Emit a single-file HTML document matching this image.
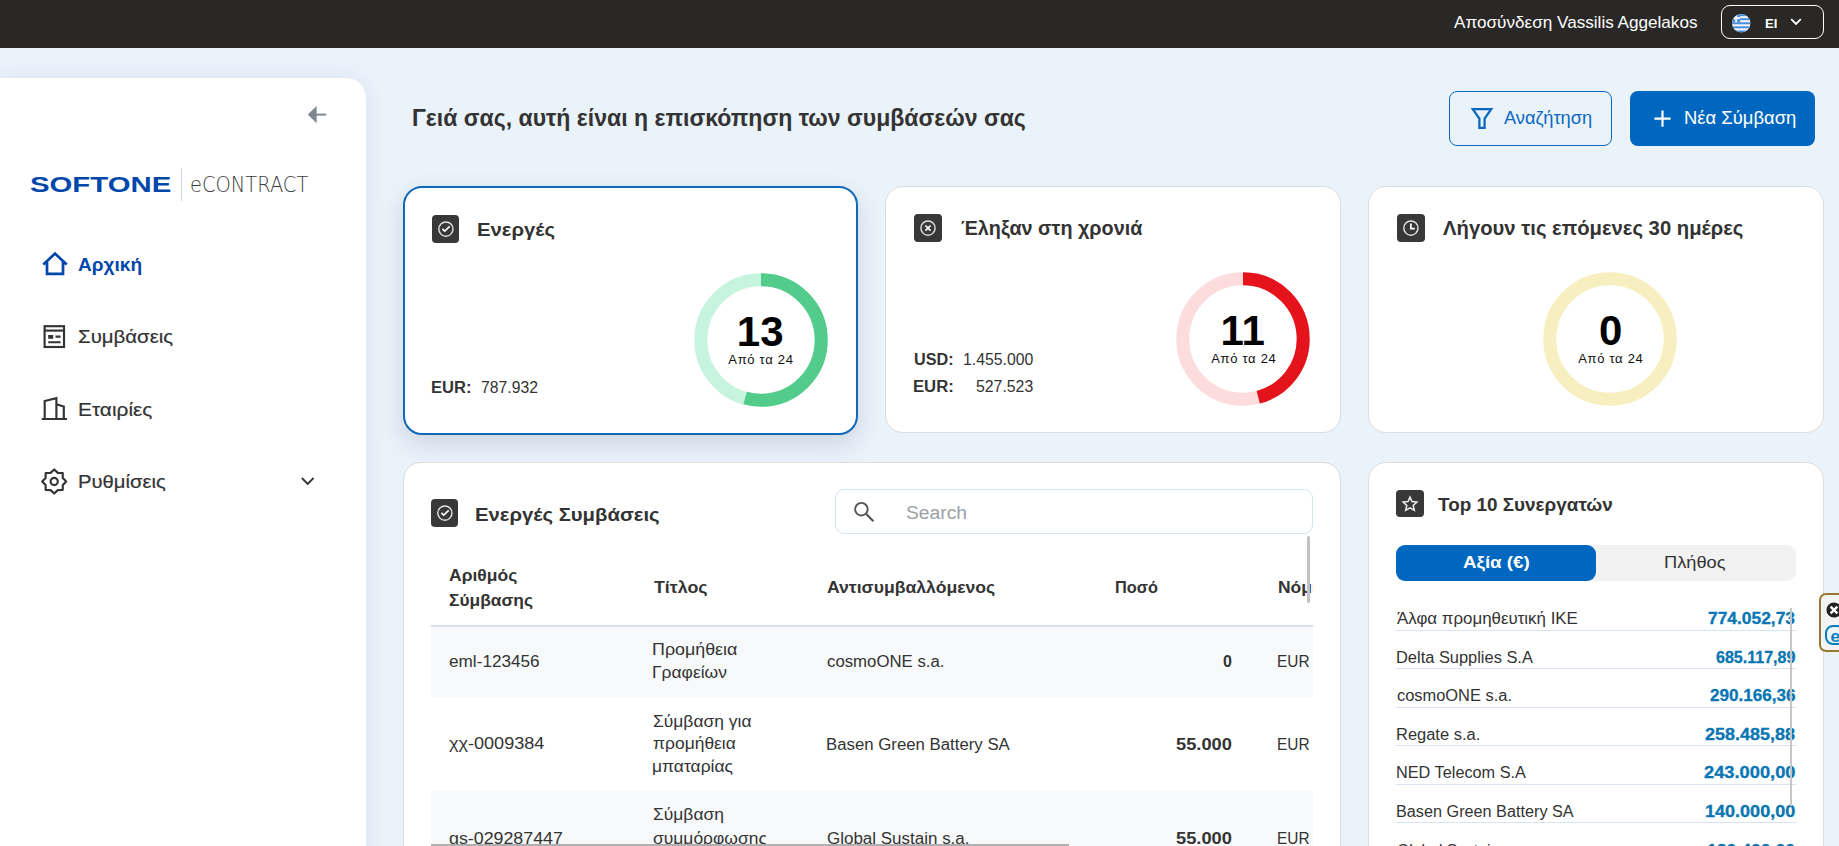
<!DOCTYPE html>
<html lang="el">
<head>
<meta charset="utf-8">
<title>eCONTRACT</title>
<style>
*{box-sizing:border-box;margin:0;padding:0}
html,body{width:1839px;height:846px;overflow:hidden}
body{background:#eaf2fa;font-family:"Liberation Sans",sans-serif;color:#333;position:relative}
.abs,.t{position:absolute}
.t{white-space:nowrap;transform-origin:0 0}
svg{position:absolute;overflow:visible}
#topbar{left:0;top:0;width:1839px;height:48px;background:#292826}
#lang{left:1721px;top:5px;width:103px;height:34px;border:1px solid #fff;border-radius:9px}
#sidebar{left:0;top:78px;width:366px;height:790px;background:#fff;border-top-right-radius:20px;box-shadow:0 0 20px rgba(90,120,160,.10)}
.btn{top:91px;height:55px;border-radius:8px}
#btnSearch{left:1449px;width:163px;border:1px solid #0b68c1}
#btnNew{left:1630px;width:185px;background:#0067c0}
.card{background:#fff;border:1px solid #dadcde;border-radius:18px}
.ico{position:absolute;width:28px;height:28px;border-radius:4px;background:#383838}
.ico svg{left:0;top:0;width:28px;height:28px}
.row{position:absolute;left:431px;width:882px}
.sep{position:absolute;left:1396px;width:400px;height:1px;background:#d9e4f0}
</style>
</head>
<body>

<header id="topbar" class="abs">
<div class="t" style="left:1454.4px;top:12px;font-size:17px;line-height:21px;color:#fff;transform:scaleX(1.007);">Αποσύνδεση Vassilis Aggelakos</div>
<div id="lang" class="abs"></div>
<svg style="left:1732.2px;top:13.7px;width:18.5px;height:18.5px" viewBox="0 0 20 20"><defs><clipPath id="fc"><circle cx="10" cy="10" r="10"/></clipPath></defs><g clip-path="url(#fc)"><rect width="20" height="20" fill="#f3f6fb"/><rect y="0" width="20" height="2.3" fill="#4a8fd8"/><rect y="4.5" width="20" height="2.2" fill="#4a8fd8"/><rect y="8.9" width="20" height="2.2" fill="#4a8fd8"/><rect y="13.3" width="20" height="2.2" fill="#4a8fd8"/><rect y="17.8" width="20" height="2.2" fill="#4a8fd8"/><rect x="0" y="0" width="8.9" height="8.9" fill="#4a8fd8"/><rect x="3.4" y="0" width="2.1" height="8.9" fill="#f3f6fb"/><rect x="0" y="3.4" width="8.9" height="2.1" fill="#f3f6fb"/></g></svg>
<div class="t" style="left:1764.5px;top:16px;font-size:12px;line-height:16px;font-weight:bold;color:#fff;transform:scaleX(1.091);">EI</div>
<svg style="left:1789px;top:17px;width:14px;height:10px" viewBox="0 0 14 10"><path d="M2.2 2.2 L7 7 L11.8 2.2" fill="none" stroke="#fff" stroke-width="1.8"/></svg>
</header>
<nav id="sidebar" class="abs"></nav>
<svg style="left:306px;top:104px;width:22px;height:22px" viewBox="306 104 22 22"><path d="M307.8 114.6 L316.6 106 L316.6 123.3 Z" fill="#7f8791"/><path d="M316 114.6 H326.2" stroke="#7f8791" stroke-width="2" fill="none"/></svg>
<div class="t" style="left:30.4px;top:171.5px;font-size:21.4px;line-height:27px;font-weight:bold;color:#0047ab;transform-origin:0 0;transform:scaleX(1.371)">SOFTONE</div>
<div class="abs" style="left:181px;top:168px;width:1px;height:33px;background:#ddd6cf"></div>
<div class="t" style="left:189.8px;top:170px;font-family:'DejaVu Sans Light','DejaVu Sans',sans-serif;font-weight:200;font-size:21px;line-height:30px;color:#3c3c3c;transform-origin:0 0;transform:scaleX(0.925)">eCONTRACT</div>
<div class="t" style="left:78.3px;top:252px;font-size:19px;line-height:25px;font-weight:bold;color:#0047ab;transform:scaleX(1.003);">Αρχική</div>
<div class="t" style="left:77.7px;top:324px;font-size:19px;line-height:25px;transform:scaleX(1.075);-webkit-text-stroke:.2px #333;">Συμβάσεις</div>
<div class="t" style="left:77.7px;top:397px;font-size:19px;line-height:25px;transform:scaleX(1.097);-webkit-text-stroke:.2px #333;">Εταιρίες</div>
<div class="t" style="left:77.7px;top:469px;font-size:19px;line-height:25px;transform:scaleX(1.065);-webkit-text-stroke:.2px #333;">Ρυθμίσεις</div>
<svg style="left:40px;top:250px;width:30px;height:28px" viewBox="40 250 30 28"><path d="M43.3 264.6 L55 253.6 L66.7 264.6 M47 261.5 V273.8 H63 V261.5" fill="none" stroke="#0047ab" stroke-width="2.7" stroke-linejoin="miter"/></svg>
<svg style="left:42px;top:324px;width:26px;height:26px" viewBox="42 324 26 26"><rect x="44.6" y="326.2" width="19.4" height="20.8" fill="none" stroke="#333" stroke-width="2.15"/><path d="M44.6 330.6 H64" stroke="#333" stroke-width="2.15"/><rect x="48.2" y="335" width="5" height="3.8" fill="#333"/><path d="M55.5 336.6 H60.6 M48.2 342.2 H60.6" stroke="#333" stroke-width="2.15"/></svg>
<svg style="left:40px;top:395px;width:30px;height:28px" viewBox="40 395 30 28"><path d="M41.7 419 H67 M44.7 419 V401 L56.4 398.2 V419 M56.4 404.2 L63.8 406.6 V419" fill="none" stroke="#333" stroke-width="2.15" stroke-linejoin="miter"/></svg>
<svg style="left:40px;top:467px;width:30px;height:30px" viewBox="40 467 30 30"><path d="M54.2 469.5 L57.8 472.9 L62.7 473.0 L62.8 477.9 L66.2 481.5 L62.8 485.1 L62.7 490.0 L57.8 490.1 L54.2 493.5 L50.6 490.1 L45.7 490.0 L45.6 485.1 L42.2 481.5 L45.6 477.9 L45.7 473.0 L50.6 472.9 Z" fill="none" stroke="#333" stroke-width="2.15" stroke-linejoin="round"/><circle cx="54.2" cy="481.5" r="3.6" fill="none" stroke="#333" stroke-width="2.15"/></svg>
<svg style="left:299px;top:474px;width:18px;height:14px" viewBox="299 474 18 14"><path d="M301.8 478 L307.7 484 L313.6 478" fill="none" stroke="#333" stroke-width="1.8"/></svg>
<main>
<div class="t" style="left:411.5px;top:103px;font-size:23px;line-height:30px;font-weight:bold;transform:scaleX(1.002);">Γειά σας, αυτή είναι η επισκόπηση των συμβάσεών σας</div>
<div id="btnSearch" class="btn abs"></div>
<svg style="left:1470px;top:106px;width:24px;height:24px" viewBox="1470 106 24 24"><path d="M1472.8 109.2 H1491.2 L1484.6 118.6 V127.8 H1479.4 V118.6 Z" fill="none" stroke="#0b68c1" stroke-width="2.3" stroke-linejoin="miter"/></svg>
<div class="t" style="left:1504.4px;top:106px;font-size:18.5px;line-height:23px;color:#0b68c1;transform:scaleX(0.987);">Αναζήτηση</div>
<div id="btnNew" class="btn abs"></div>
<svg style="left:1652px;top:108px;width:22px;height:22px" viewBox="1652 108 22 22"><path d="M1654.4 118.6 H1670.6 M1662.5 110.5 V126.7" stroke="#fff" stroke-width="2.2" fill="none"/></svg>
<div class="t" style="left:1684.2px;top:106px;font-size:18.5px;line-height:23px;color:#fff;transform:scaleX(0.997);">Νέα Σύμβαση</div>
<section class="card abs" style="left:403px;top:186px;width:455px;height:249px;border:2px solid #0f68b9;border-radius:19px;box-shadow:0 9px 24px rgba(60,70,88,.17)"></section>
<div class="ico" style="left:432px;top:215px;width:27px"><svg viewBox="0 0 28 28"><circle cx="13.9" cy="14.1" r="7.1" fill="none" stroke="#e4e4e4" stroke-width="1.4"/><path d="M10.4 13.9 L12.7 16.2 L17.7 11.4" fill="none" stroke="#fff" stroke-width="1.6"/></svg></div>
<div class="t" style="left:476.7px;top:217px;font-size:19px;line-height:25px;font-weight:bold;transform:scaleX(1.069);">Ενεργές</div>
<div class="t" style="left:431.0px;top:377px;font-size:16px;line-height:21px;font-weight:bold;transform:scaleX(1.033);">EUR:</div>
<div class="t" style="left:481.0px;top:377px;font-size:16px;line-height:21px;transform:scaleX(0.984);">787.932</div>
<svg style="left:690.5px;top:270px;width:140px;height:140px" viewBox="690.5 270 140 140"><circle cx="760.5" cy="340" r="60.2" fill="none" stroke="#c6f4de" stroke-width="13"/><circle cx="760.5" cy="340" r="60.2" fill="none" stroke="#53cb8b" stroke-width="13" stroke-dasharray="204.88 378.25" transform="rotate(-90 760.5 340)"/></svg><div class="t" style="left:736.8px;top:305px;font-size:42px;line-height:53px;font-weight:bold;color:#000;">13</div><div class="t" style="left:728.3px;top:351px;font-size:13px;line-height:17px;color:#111;letter-spacing:0.7px;">Από τα 24</div>
<section class="card abs" style="left:885px;top:186px;width:456px;height:247px"></section>
<div class="ico" style="left:914px;top:214px"><svg viewBox="0 0 28 28"><circle cx="14" cy="14.1" r="7.1" fill="none" stroke="#e4e4e4" stroke-width="1.4"/><path d="M11.4 11.5 L16.6 16.7 M16.6 11.5 L11.4 16.7" fill="none" stroke="#fff" stroke-width="1.7"/></svg></div>
<div class="t" style="left:961.1px;top:215px;font-size:20px;line-height:26px;font-weight:bold;transform:scaleX(0.988);">Έληξαν στη χρονιά</div>
<div class="t" style="left:913.8px;top:349px;font-size:16px;line-height:21px;font-weight:bold;transform:scaleX(1.014);">USD:</div>
<div class="t" style="left:962.6px;top:349px;font-size:16px;line-height:21px;transform:scaleX(0.987);">1.455.000</div>
<div class="t" style="left:912.8px;top:376px;font-size:16px;line-height:21px;font-weight:bold;transform:scaleX(1.041);">EUR:</div>
<div class="t" style="left:975.7px;top:376px;font-size:16px;line-height:21px;transform:scaleX(0.989);">527.523</div>
<svg style="left:1173.4px;top:269px;width:140px;height:140px" viewBox="1173.4 269 140 140"><circle cx="1243.4" cy="339" r="60.2" fill="none" stroke="#fcdcdc" stroke-width="13"/><circle cx="1243.4" cy="339" r="60.2" fill="none" stroke="#e5131b" stroke-width="13" stroke-dasharray="173.36 378.25" transform="rotate(-90 1243.4 339)"/></svg><div class="t" style="left:1220.4px;top:304px;font-size:42px;line-height:53px;font-weight:bold;color:#000;">11</div><div class="t" style="left:1211.2px;top:350px;font-size:13px;line-height:17px;color:#111;letter-spacing:0.7px;">Από τα 24</div>
<section class="card abs" style="left:1368px;top:186px;width:456px;height:247px"></section>
<div class="ico" style="left:1397px;top:214px"><svg viewBox="0 0 28 28"><circle cx="13.9" cy="14.1" r="7.1" fill="none" stroke="#e4e4e4" stroke-width="1.4"/><path d="M13.9 9.6 V14.7 H17.8" fill="none" stroke="#fff" stroke-width="1.7"/></svg></div>
<div class="t" style="left:1443.0px;top:215px;font-size:20px;line-height:26px;font-weight:bold;transform:scaleX(1.013);">Λήγουν τις επόμενες 30 ημέρες</div>
<svg style="left:1540.4px;top:269px;width:140px;height:140px" viewBox="1540.4 269 140 140"><circle cx="1610.4" cy="339" r="60.2" fill="none" stroke="#f7efc0" stroke-width="13"/></svg><div class="t" style="left:1598.9px;top:304px;font-size:42px;line-height:53px;font-weight:bold;color:#000;">0</div><div class="t" style="left:1578.2px;top:350px;font-size:13px;line-height:17px;color:#111;letter-spacing:0.7px;">Από τα 24</div>
<section class="card abs" style="left:403px;top:462px;width:938px;height:420px"></section>
<div class="ico" style="left:431px;top:499px;width:27px"><svg viewBox="0 0 28 28"><circle cx="13.9" cy="14.1" r="7.1" fill="none" stroke="#e4e4e4" stroke-width="1.4"/><path d="M10.4 13.9 L12.7 16.2 L17.7 11.4" fill="none" stroke="#fff" stroke-width="1.6"/></svg></div>
<div class="t" style="left:475.3px;top:502px;font-size:19px;line-height:25px;font-weight:bold;transform:scaleX(1.068);">Ενεργές Συμβάσεις</div>
<div class="abs" style="left:835px;top:489px;width:478px;height:45px;border:1px solid #d6e3f0;border-radius:9px"></div>
<svg style="left:852px;top:500px;width:24px;height:24px" viewBox="852 500 24 24"><circle cx="861.4" cy="509.2" r="6.3" fill="none" stroke="#555" stroke-width="1.9"/><path d="M866 513.8 L873.4 521.2" stroke="#555" stroke-width="2.2" fill="none"/></svg>
<div class="t" style="left:906.0px;top:502px;font-size:18px;line-height:22px;color:#9aa0a6;transform:scaleX(1.071);">Search</div>
<div class="abs" style="left:431px;top:536px;width:882px;height:310px;overflow:hidden">
<div class="abs" style="left:0;top:89px;width:882px;height:2px;background:#d6e2ef"></div>
<div class="abs" style="left:0;top:91px;width:882px;height:70px;background:#f7f9fa"></div>
<div class="abs" style="left:0;top:255px;width:882px;height:94px;background:#f7f9fa"></div>
<div class="t" style="left:18.4px;top:28px;font-size:16.5px;line-height:22px;font-weight:bold;transform:scaleX(1.06);">Αριθμός</div>
<div class="t" style="left:18.4px;top:53px;font-size:16.5px;line-height:22px;font-weight:bold;transform:scaleX(1.053);">Σύμβασης</div>
<div class="t" style="left:222.8px;top:41px;font-size:16px;line-height:21px;font-weight:bold;transform:scaleX(1.112);">Τίτλος</div>
<div class="t" style="left:396.0px;top:41px;font-size:16px;line-height:21px;font-weight:bold;transform:scaleX(1.101);">Αντισυμβαλλόμενος</div>
<div class="t" style="left:683.9px;top:41px;font-size:16px;line-height:21px;font-weight:bold;transform:scaleX(1.02);">Ποσό</div>
<div class="t" style="left:846.9px;top:41px;font-size:16px;line-height:21px;font-weight:bold;transform:scaleX(1.09);">Νόμισμα</div>
<div class="t" style="left:17.9px;top:115px;font-size:16px;line-height:21px;transform:scaleX(1.073);">eml-123456</div>
<div class="t" style="left:221.1px;top:103px;font-size:16px;line-height:21px;transform:scaleX(1.115);">Προμήθεια</div>
<div class="t" style="left:221.1px;top:126px;font-size:16px;line-height:21px;transform:scaleX(1.09);">Γραφείων</div>
<div class="t" style="left:396.0px;top:115px;font-size:16px;line-height:21px;transform:scaleX(1.049);">cosmoONE s.a.</div>
<div class="t" style="left:792.0px;top:115px;font-size:16px;line-height:21px;font-weight:bold;">0</div>
<div class="t" style="left:846.0px;top:115px;font-size:16px;line-height:21px;transform:scaleX(0.962);">EUR</div>
<div class="t" style="left:18.0px;top:197px;font-size:16px;line-height:21px;transform:scaleX(1.13);">χχ-0009384</div>
<div class="t" style="left:222.2px;top:175px;font-size:16px;line-height:21px;transform:scaleX(1.09);">Σύμβαση για</div>
<div class="t" style="left:222.2px;top:197px;font-size:16px;line-height:21px;transform:scaleX(1.09);">προμήθεια</div>
<div class="t" style="left:221.1px;top:220px;font-size:16px;line-height:21px;transform:scaleX(1.09);">μπαταρίας</div>
<div class="t" style="left:395.0px;top:198px;font-size:16px;line-height:21px;transform:scaleX(1.049);">Basen Green Battery SA</div>
<div class="t" style="left:745.0px;top:198px;font-size:16px;line-height:21px;font-weight:bold;transform:scaleX(1.142);">55.000</div>
<div class="t" style="left:846.0px;top:198px;font-size:16px;line-height:21px;transform:scaleX(0.962);">EUR</div>
<div class="t" style="left:18.0px;top:292px;font-size:16px;line-height:21px;transform:scaleX(1.113);">gs-029287447</div>
<div class="t" style="left:222.2px;top:268px;font-size:16px;line-height:21px;transform:scaleX(1.09);">Σύμβαση</div>
<div class="t" style="left:222.2px;top:292px;font-size:16px;line-height:21px;transform:scaleX(1.09);">συμμόρφωσης</div>
<div class="t" style="left:396.0px;top:292px;font-size:16px;line-height:21px;transform:scaleX(1.061);">Global Sustain s.a.</div>
<div class="t" style="left:745.0px;top:292px;font-size:16px;line-height:21px;font-weight:bold;transform:scaleX(1.142);">55.000</div>
<div class="t" style="left:846.0px;top:292px;font-size:16px;line-height:21px;transform:scaleX(0.962);">EUR</div>
</div>
<div class="abs" style="left:1307px;top:536px;width:3px;height:67px;background:#c1c1c1;border-radius:2px"></div>
<div class="abs" style="left:431px;top:844px;width:638px;height:2px;background:#b0b0b0"></div>
<section class="card abs" style="left:1368px;top:462px;width:456px;height:420px"></section>
<div class="ico" style="left:1396px;top:490px;height:27px"><svg viewBox="0 0 28 28"><path d="M14.0 7.1 L16.0 11.6 L20.9 12.1 L17.2 15.5 L18.3 20.3 L14.0 17.8 L9.7 20.3 L10.8 15.5 L7.1 12.1 L12.0 11.6 Z" fill="none" stroke="#f0f0f0" stroke-width="1.5" stroke-linejoin="miter"/></svg></div>
<div class="t" style="left:1438.0px;top:494px;font-size:18px;line-height:22px;font-weight:bold;transform:scaleX(1.05);">Top 10 Συνεργατών</div>
<div class="abs" style="left:1396px;top:545px;width:400px;height:36px;background:#f2f2f2;border-radius:9px"></div>
<div class="abs" style="left:1396px;top:545px;width:200px;height:36px;background:#0067c0;border-radius:9px"></div>
<div class="t" style="left:1462.9px;top:552px;font-size:16px;line-height:21px;font-weight:bold;color:#fff;transform:scaleX(1.172);">Αξία (€)</div>
<div class="t" style="left:1664.2px;top:552px;font-size:16px;line-height:21px;transform:scaleX(1.14);">Πλήθος</div>
<div class="t" style="left:1396.6px;top:608px;font-size:16px;line-height:21px;transform:scaleX(1.055);">Άλφα προμηθευτική ΙΚΕ</div>
<div class="t" style="left:1708.3px;top:608px;font-size:16px;line-height:21px;font-weight:bold;color:#0976b3;transform:scaleX(1.086);-webkit-text-stroke:.3px #0976b3;">774.052,73</div>
<div class="sep" style="top:630px"></div>
<div class="t" style="left:1395.6px;top:647px;font-size:16px;line-height:21px;transform:scaleX(1.026);">Delta Supplies S.A</div>
<div class="t" style="left:1715.9px;top:647px;font-size:16px;line-height:21px;font-weight:bold;color:#0976b3;transform:scaleX(1.003);-webkit-text-stroke:.3px #0976b3;">685.117,89</div>
<div class="sep" style="top:668px"></div>
<div class="t" style="left:1396.6px;top:685px;font-size:16px;line-height:21px;transform:scaleX(1.026);">cosmoONE s.a.</div>
<div class="t" style="left:1709.8px;top:685px;font-size:16px;line-height:21px;font-weight:bold;color:#0976b3;transform:scaleX(1.068);-webkit-text-stroke:.3px #0976b3;">290.166,36</div>
<div class="sep" style="top:707px"></div>
<div class="t" style="left:1395.6px;top:724px;font-size:16px;line-height:21px;transform:scaleX(1.029);">Regate s.a.</div>
<div class="t" style="left:1705.3px;top:724px;font-size:16px;line-height:21px;font-weight:bold;color:#0976b3;transform:scaleX(1.124);-webkit-text-stroke:.3px #0976b3;">258.485,88</div>
<div class="sep" style="top:745px"></div>
<div class="t" style="left:1395.6px;top:762px;font-size:16px;line-height:21px;transform:scaleX(1.017);">NED Telecom S.A</div>
<div class="t" style="left:1703.8px;top:762px;font-size:16px;line-height:21px;font-weight:bold;color:#0976b3;transform:scaleX(1.142);-webkit-text-stroke:.3px #0976b3;">243.000,00</div>
<div class="sep" style="top:784px"></div>
<div class="t" style="left:1395.6px;top:801px;font-size:16px;line-height:21px;transform:scaleX(1.014);">Basen Green Battery SA</div>
<div class="t" style="left:1705.1px;top:801px;font-size:16px;line-height:21px;font-weight:bold;color:#0976b3;transform:scaleX(1.127);-webkit-text-stroke:.3px #0976b3;">140.000,00</div>
<div class="sep" style="top:822px"></div>
<div class="t" style="left:1396.6px;top:840px;font-size:16px;line-height:21px;transform:scaleX(0.982);">Global Sustain s.a.</div>
<div class="t" style="left:1707.2px;top:840px;font-size:16px;line-height:21px;font-weight:bold;color:#0976b3;transform:scaleX(1.1);-webkit-text-stroke:.3px #0976b3;">120.400,00</div>
<div class="sep" style="top:861px"></div>
<div class="abs" style="left:1790px;top:608px;width:2px;height:198px;background:#c6c6c6"></div>
<div class="abs" style="left:1819px;top:593px;width:30px;height:59px;border:2px solid #97782e;border-radius:7px;background:#f3f3f3"></div>
<svg style="left:1826px;top:602px;width:16px;height:16px" viewBox="0 0 16 16"><circle cx="8" cy="8" r="7.6" fill="#222"/><path d="M4.6 4.6 L11.4 11.4 M11.4 4.6 L4.6 11.4" stroke="#fff" stroke-width="2.4"/></svg>
<svg style="left:1825px;top:625px;width:20px;height:20px" viewBox="0 0 20 20"><rect x="1" y="1" width="18" height="18" rx="7" fill="#eaf4fb" stroke="#0a7cbc" stroke-width="2"/></svg>
<div class="t" style="left:1830.5px;top:626px;font-size:17px;line-height:21px;font-weight:bold;color:#0a7cbc;">e</div>
</main>
</body>
</html>
